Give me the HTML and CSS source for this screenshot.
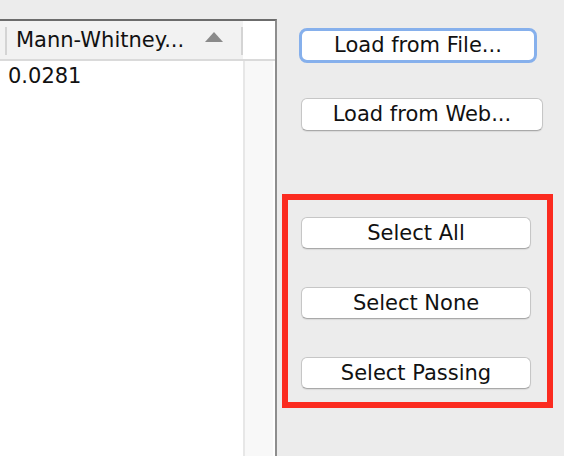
FILE: index.html
```html
<!DOCTYPE html>
<html>
<head>
<meta charset="utf-8">
<link rel="stylesheet" href="styles.css">
</head>
<body>
<div class="app">
  <div class="pane">
    <div class="head">
      <div class="hcell">
        <div class="hstub"></div>
        <div class="sep"></div>
        <div class="hlabel">Mann-Whitney...</div>
        <svg class="sort" width="18" height="10" viewBox="0 0 18 10"><polygon points="9,0 18,10 0,10" fill="#8a8a8a"/></svg>
        <div class="sep"></div>
      </div>
      <div class="corner"></div>
    </div>
    <div class="body">
      <div class="col">
        <div class="row">0.0281</div>
      </div>
      <div class="strip"></div>
    </div>
  </div>
  <div class="side">
    <button class="btn focus">Load from File...</button>
    <button class="btn web">Load from Web...</button>
    <div class="redbox">
      <button class="btn sel">Select All</button>
      <button class="btn sel">Select None</button>
      <button class="btn sel">Select Passing</button>
    </div>
  </div>
</div>
</body>
</html>
```
FILE: styles.css
```css
html, body {
  margin: 0;
  padding: 0;
  height: 100%;
  overflow: hidden;
  background: #ececec;
  font-family: "DejaVu Sans", "Liberation Sans", sans-serif;
  font-size: 21px;
  color: #111;
}
.app {
  display: flex;
  height: 100%;
}
.pane {
  flex: 0 0 auto;
  width: 275px;
  margin-top: 19px;
  border-top: 2px solid #6c6c6c;
  border-right: 2px solid #8e8e8e;
  display: flex;
  flex-direction: column;
  background: #fff;
}
.head {
  display: flex;
  height: 38px;
  border-bottom: 2px solid #dadada;
}
.hcell {
  width: 243px;
  background: #f2f2f2;
  display: flex;
  align-items: center;
}
.hstub {
  width: 5px;
}
.sep {
  width: 2px;
  align-self: stretch;
  margin: 6px 0 4px;
  background: #d4d4d4;
}
.hlabel {
  padding-left: 9px;
  width: 189px;
  white-space: nowrap;
  line-height: 38px;
}
.sort {
  margin-right: 18px;
  margin-top: -7px;
}
.corner {
  flex: 1;
  background: #fff;
}
.body {
  flex: 1;
  display: flex;
}
.col {
  width: 243px;
  background: #fff;
}
.row {
  height: 30px;
  line-height: 30px;
  padding-left: 8px;
}
.strip {
  width: 28px;
  border-left: 2px solid #e7e7e7;
  background: #f8f8f8;
}
.side {
  flex: 0 0 auto;
  display: flex;
  flex-direction: column;
  align-items: flex-start;
}
.btn {
  font-family: inherit;
  font-size: 21px;
  color: #111;
  background: #fff;
  border: 1px solid #c6c6c6;
  border-bottom-color: #a9a9a9;
  border-radius: 6px;
  box-shadow: 0 1px 1px rgba(0,0,0,0.08);
  padding: 0;
  display: flex;
  align-items: center;
  justify-content: center;
  line-height: 1;
}
.focus {
  margin: 28px 0 0 22px;
  width: 238px;
  height: 35px;
  border: 3px solid #86b0ec;
  border-radius: 8px;
  box-shadow: none;
}
.web {
  margin: 35px 0 0 24px;
  width: 242px;
  height: 33px;
}
.redbox {
  margin: 63px 0 0 5px;
  width: 246px;
  height: 185px;
  border: 6px solid #fb2b20;
  padding: 17px 0 0 13px;
  display: flex;
  flex-direction: column;
  gap: 38px;
}
.sel {
  flex: 0 0 auto;
  width: 230px;
  height: 32px;
}
```
